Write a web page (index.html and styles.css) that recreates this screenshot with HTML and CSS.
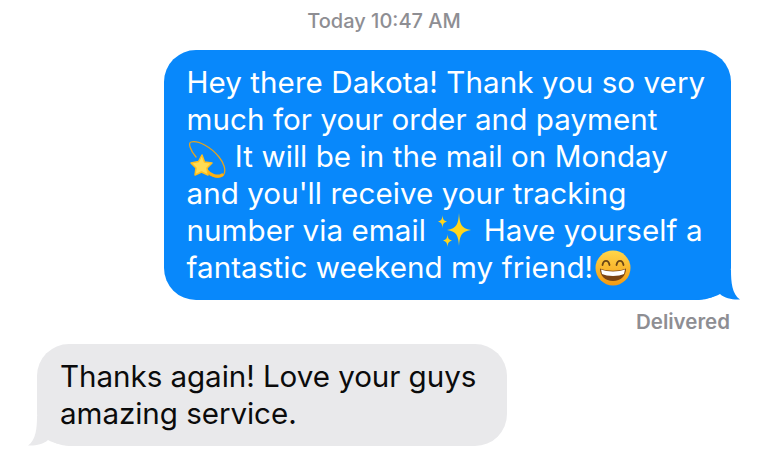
FILE: index.html
```html
<!DOCTYPE html>
<html lang="en">
<head>
<meta charset="utf-8">
<title>Messages</title>
<link rel="stylesheet" href="styles.css">
</head>
<body>
<main class="thread">
  <p class="stamp">Today 10:47 AM</p>
  <div class="row row-out">
    <div class="bubble bubble-out">
      <svg class="tail tail-out" viewBox="0 0 46 30" aria-hidden="true"><path d="M0 0H36C36 12 37 24 45 29.500C38 30 30 28.500 25 24C19 27.500 10 29 0 30Z"/></svg>
      <span class="line">Hey there Dakota! Thank you so very</span>
      <span class="line">much for your order and payment</span>
      <span class="line"><svg class="emoji emoji-dizzy" viewBox="0 0 40 40" aria-hidden="true">
        <path d="M9 17C3 10 1 3 4 2C11 0 24 7 32 17C37 23 39 30 37 34C35 38 29 38 23 35" fill="none" stroke="#e6a41c" stroke-width="1.300" stroke-linecap="round"/>
        <path d="M18 29C23 35 30 38 35 35" fill="none" stroke="#ffb010" stroke-width="3.200" stroke-linecap="round"/>
        <path d="M15 15L17.500 22L25 23L20 28L21 35L14.500 32L8 35L9 28L4 23L11.500 21.500Z" fill="#ffdc55" stroke="#ffbf1c" stroke-width="1.500" stroke-linejoin="round"/>
      </svg> It will be in the mail on Monday</span>
      <span class="line">and you'll receive your tracking</span>
      <span class="line">number via email <svg class="emoji emoji-sparkles" viewBox="0 0 34 34" aria-hidden="true">
        <path d="M21 0C21.700 11 23 15.500 33 17C23 18.500 21.700 23 21 33C20.300 23 19 18.500 9 17C19 15.500 20.300 11 21 0Z" fill="#ffd51c"/>
        <path d="M4.500 2C4.800 6 5.500 7.500 9 8.500C5.500 9.500 4.800 11 4.500 15C4.200 11 3.500 9.500 0 8.500C3.500 7.500 4.200 6 4.500 2Z" fill="#ffd51c"/>
        <path d="M9.500 21C9.800 25 10.500 26.500 14 27.500C10.500 28.500 9.800 30 9.500 34C9.200 30 8.500 28.500 5 27.500C8.500 26.500 9.200 25 9.500 21Z" fill="#ffd51c"/>
      </svg> Have yourself a</span>
      <span class="line">fantastic weekend my friend!<svg class="emoji emoji-grin" viewBox="0 0 36 36" aria-hidden="true">
        <defs><linearGradient id="face" x1="0" y1="0" x2="0" y2="1"><stop offset="0" stop-color="#ffd64a"/><stop offset="1" stop-color="#f39a14"/></linearGradient></defs>
        <circle cx="18" cy="18" r="17.500" fill="url(#face)"/>
        <path d="M7.500 15C8.500 9.500 13.500 9.500 14.500 15M21.500 15C22.500 9.500 27.500 9.500 28.500 15" fill="none" stroke="#6b4616" stroke-width="1.800" stroke-linecap="round"/>
        <path d="M5 18.500C12 21.500 24 21.500 31 18.500C31 26 26 31 18 31C10 31 5 26 5 18.500Z" fill="#7a4414"/>
        <path d="M6 19.500C12 22 24 22 30 19.500L29 24C24 26.500 12 26.500 7 24Z" fill="#fff"/>
      </svg></span>
    </div>
  </div>
  <p class="status">Delivered</p>
  <div class="row row-in">
    <div class="bubble bubble-in">
      <svg class="tail tail-in" viewBox="0 0 46 30" aria-hidden="true"><path d="M46 0H10C10 12 9 24 1 29.500C8 30 16 28.500 21 24C27 27.500 36 29 46 30Z"/></svg>
      <span class="line">Thanks again! Love your guys</span>
      <span class="line">amazing service.</span>
    </div>
  </div>
</main>
</body>
</html>
```

FILE: styles.css
```css
html, body {
  margin: 0;
  background: #fff;
}
body {
  width: 768px;
  height: 459px;
  overflow: hidden;
  font-family: Inter, "Liberation Sans", sans-serif;
}
.thread {
  display: flex;
  flex-direction: column;
}
.stamp {
  margin: 0;
  padding-top: 10px;
  height: 50px;
  box-sizing: border-box;
  text-align: center;
  font-size: 20px;
  line-height: 22px;
  color: #8e8e93;
  font-weight: 500;
}
.row {
  display: flex;
}
.row-out {
  justify-content: flex-end;
  padding-right: 37px;
}
.row-in {
  padding-left: 37px;
  margin-top: 11px;
}
.bubble {
  position: relative;
  box-sizing: border-box;
  font-size: 29.6px;
  line-height: 37px;
  letter-spacing: 0.05px;
  border-radius: 32px;
  white-space: nowrap;
}
.line {
  display: block;
  position: relative;
  height: 37px;
}
.bubble-out {
  width: 567px;
  height: 250px;
  padding: 14px 0 0 22.5px;
  background: #0888fb;
  color: #fff;
}
.bubble-in {
  width: 470px;
  height: 102px;
  padding: 14px 0 0 23px;
  letter-spacing: -0.06px;
  background: #e9e9eb;
  color: #0b0b0b;
}
.emoji {
  display: inline-block;
}
.emoji-dizzy {
  width: 40px;
  height: 40px;
  vertical-align: -13px;
}
.emoji-sparkles {
  width: 34px;
  height: 34px;
  vertical-align: -6px;
  margin: 0 3px 0 4px;
}
.emoji-grin {
  width: 36px;
  height: 36px;
  vertical-align: -8px;
  margin-left: 2px;
}
.tail {
  position: absolute;
  bottom: 0;
  width: 46px;
  height: 30px;
}
.tail-out {
  right: -10px;
  fill: #0888fb;
}
.tail-in {
  left: -10px;
  fill: #e9e9eb;
}
.status {
  margin: 11px 38px 0 0;
  text-align: right;
  font-size: 20.5px;
  line-height: 22px;
  font-weight: 600;
  color: #8e8e93;
}
```
